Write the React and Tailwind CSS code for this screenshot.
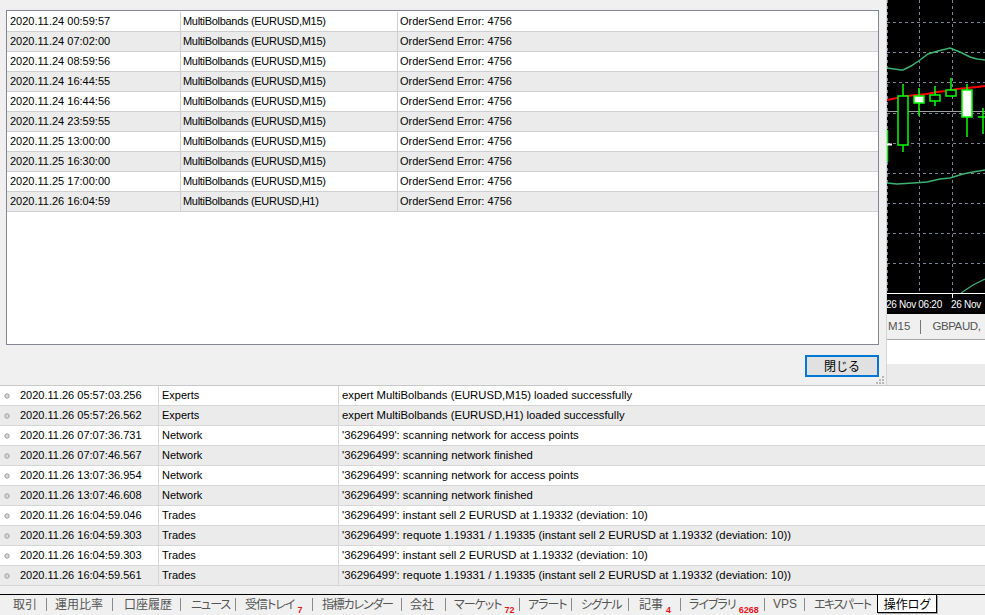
import React from "react";

const topRows = [
  ["2020.11.24 00:59:57", "MultiBolbands (EURUSD,M15)"],
  ["2020.11.24 07:02:00", "MultiBolbands (EURUSD,M15)"],
  ["2020.11.24 08:59:56", "MultiBolbands (EURUSD,M15)"],
  ["2020.11.24 16:44:55", "MultiBolbands (EURUSD,M15)"],
  ["2020.11.24 16:44:56", "MultiBolbands (EURUSD,M15)"],
  ["2020.11.24 23:59:55", "MultiBolbands (EURUSD,M15)"],
  ["2020.11.25 13:00:00", "MultiBolbands (EURUSD,M15)"],
  ["2020.11.25 16:30:00", "MultiBolbands (EURUSD,M15)"],
  ["2020.11.25 17:00:00", "MultiBolbands (EURUSD,M15)"],
  ["2020.11.26 16:04:59", "MultiBolbands (EURUSD,H1)"],
];

const logRows = [
  ["2020.11.26 05:57:03.256", "Experts", "expert MultiBolbands (EURUSD,M15) loaded successfully"],
  ["2020.11.26 05:57:26.562", "Experts", "expert MultiBolbands (EURUSD,H1) loaded successfully"],
  ["2020.11.26 07:07:36.731", "Network", "'36296499': scanning network for access points"],
  ["2020.11.26 07:07:46.567", "Network", "'36296499': scanning network finished"],
  ["2020.11.26 13:07:36.954", "Network", "'36296499': scanning network for access points"],
  ["2020.11.26 13:07:46.608", "Network", "'36296499': scanning network finished"],
  ["2020.11.26 16:04:59.046", "Trades", "'36296499': instant sell 2 EURUSD at 1.19332 (deviation: 10)"],
  ["2020.11.26 16:04:59.303", "Trades", "'36296499': requote 1.19331 / 1.19335 (instant sell 2 EURUSD at 1.19332 (deviation: 10))"],
  ["2020.11.26 16:04:59.303", "Trades", "'36296499': instant sell 2 EURUSD at 1.19332 (deviation: 10)"],
  ["2020.11.26 16:04:59.561", "Trades", "'36296499': requote 1.19331 / 1.19335 (instant sell 2 EURUSD at 1.19332 (deviation: 10))"],
];

function Chart() {
  const hs = [22, 52, 82, 113, 143, 173, 203, 233, 263];
  const vs = [0.5, 32.5, 65.5];
  const candles = [
    { x: 11, top: 96, bot: 145, wt: 84, wb: 152, fill: "#000" },
    { x: 27, top: 96, bot: 103, wt: 88, wb: 116, fill: "#fff" },
    { x: 43, top: 95, bot: 101, wt: 86, wb: 106, fill: "#000" },
    { x: 59, top: 90, bot: 96, wt: 78, wb: 96, fill: "#000" },
    { x: 75, top: 90, bot: 117, wt: 84, wb: 137, fill: "#fff" },
  ];
  return (
    <svg width="98" height="314" className="block">
      <rect x="0" y="0" width="98" height="314" fill="#000" />
      {hs.map((y) => (
        <line key={"h" + y} x1="0" x2="98" y1={y + 0.5} y2={y + 0.5} stroke="#7a8698" strokeDasharray="3 3" />
      ))}
      {vs.map((x) => (
        <line key={"v" + x} x1={x} x2={x} y1="0" y2="293" stroke="#7a8698" strokeDasharray="3 3" />
      ))}
      <line x1="0" x2="98" y1="111.5" y2="111.5" stroke="#a0a0a0" />
      <polyline
        points="0,68 14,70 16,70 24,66 33,60 41,54 51,51 63,48 68,50 73,52 83,57 90,59 98,60"
        fill="none"
        stroke="#3cb371"
        strokeWidth="1.5"
      />
      <polyline
        points="0,100 10,98 20,96 30,95 40,94 50,92 60,91 70,89 80,88 90,87 98,86"
        fill="none"
        stroke="#ff0000"
        strokeWidth="2"
      />
      <polyline
        points="0,183 10,184 26,183 40,182 53,179 63,178 76,174 86,172 98,170"
        fill="none"
        stroke="#3cb371"
        strokeWidth="1.5"
      />
      <polyline points="74,293 80,289 86,285 92,282 98,279" fill="none" stroke="#3cb371" strokeWidth="1.2" />
      <line x1="0.5" x2="0.5" y1="130" y2="162" stroke="#00ff00" strokeWidth="1.5" />
      <line x1="0" x2="5" y1="144.5" y2="144.5" stroke="#ffffff" strokeWidth="2" />
      {candles.map((c, i) => (
        <g key={i}>
          <line x1={c.x + 5} x2={c.x + 5} y1={c.wt} y2={c.wb} stroke="#00ff00" strokeWidth="1.5" />
          <rect x={c.x} y={c.top} width="10" height={c.bot - c.top} fill={c.fill} stroke="#00ff00" strokeWidth="1.5" />
        </g>
      ))}
      <line x1="96" x2="96" y1="108" y2="134" stroke="#00ff00" strokeWidth="1.5" />
      <line x1="91" x2="98" y1="117" y2="117" stroke="#00ff00" strokeWidth="1.5" />
      <rect x="0" y="293" width="98" height="21" fill="#000" />
      <line x1="0" x2="98" y1="293.5" y2="293.5" stroke="#ffffff" />
      <line x1="65.5" x2="65.5" y1="293" y2="298" stroke="#ffffff" />
      <text x="-1" y="308" fill="#ffffff" fontSize="10" letterSpacing="-0.3" fontFamily="Liberation Sans, sans-serif">
        26 Nov 06:20
      </text>
      <text x="64" y="308" fill="#ffffff" fontSize="10" letterSpacing="-0.3" fontFamily="Liberation Sans, sans-serif">
        26 Nov
      </text>
    </svg>
  );
}

function Grip() {
  return (
    <svg width="8" height="8" className="block">
      <rect x="6" y="0" width="2" height="2" fill="#b8b8b8" />
      <rect x="3" y="3" width="2" height="2" fill="#b8b8b8" />
      <rect x="6" y="3" width="2" height="2" fill="#b8b8b8" />
      <rect x="0" y="6" width="2" height="2" fill="#b8b8b8" />
      <rect x="3" y="6" width="2" height="2" fill="#b8b8b8" />
      <rect x="6" y="6" width="2" height="2" fill="#b8b8b8" />
    </svg>
  );
}

function Sep() {
  return <div className="w-px h-[13px] bg-[#8a8a8a] shrink-0" />;
}

function Num({ children }) {
  return (
    <span className="text-[9px] font-bold tracking-normal text-[#e8141a] ml-[3px] relative top-[4px] font-['Liberation_Sans',sans-serif]">
      {children}
    </span>
  );
}

export default function App() {
  return (
    <div className="w-[985px] h-[615px] overflow-hidden bg-[#f0f0f0] flex flex-col text-black font-['Liberation_Sans',sans-serif] text-[11px]">
      {/* top section */}
      <div className="h-[385px] flex shrink-0">
        {/* dialog */}
        <div className="w-[887px] h-full border-r border-[#d4d4d4] flex flex-col relative">
          <div className="ml-[6px] mt-[10px] w-[873px] h-[335px] border border-[#828790] bg-white pt-px overflow-hidden">
            {topRows.map((r, i) => (
              <div
                key={i}
                className={`flex h-[20px] border-b border-[#d0d0d0] whitespace-nowrap ${i % 2 === 1 ? "bg-[#ebebeb]" : "bg-white"}`}
              >
                <div className="w-[174px] border-r border-[#d0d0d0] flex items-center pl-[3px]">{r[0]}</div>
                <div className="w-[217px] border-r border-[#d0d0d0] flex items-center pl-[2px] tracking-[-0.3px]">{r[1]}</div>
                <div className="flex-1 flex items-center pl-[2px]">OrderSend Error: 4756</div>
              </div>
            ))}
          </div>
          <div className="ml-[6px] w-[873px] mt-[10px] flex justify-end">
            <button className="w-[74px] h-[22px] border-2 border-[#0078d7] bg-[#e1e1e1] flex items-center justify-center text-[12px] font-['Noto_Sans_CJK_JP',sans-serif] leading-none">
              閉じる
            </button>
          </div>
          <div className="absolute right-[2px] bottom-[1px]">
            <Grip />
          </div>
        </div>
        {/* chart column */}
        <div className="w-[98px] h-full flex flex-col">
          <Chart />
          <div className="h-[26px] bg-[#f0f0f0] border-b border-[#a8a8a8] flex items-center text-[11.5px] text-[#555] font-['Liberation_Sans',sans-serif] whitespace-nowrap overflow-hidden">
            <span className="ml-[1px]">M15</span>
            <span className="w-px h-[14px] bg-[#777] ml-[10px] mr-[11px] shrink-0" />
            <span className="tracking-[-0.4px]">GBPAUD,</span>
          </div>
          <div className="h-[24px] bg-white" />
          <div className="flex-1 bg-[#ebebeb]" />
        </div>
      </div>

      {/* log */}
      <div className="border-t border-[#c8c8c8] shrink-0">
        {logRows.map((r, i) => (
          <div
            key={i}
            className={`flex h-[20px] border-b border-[#d6d6d6] whitespace-nowrap ${i % 2 === 1 ? "bg-[#ebebeb]" : "bg-white"}`}
          >
            <div className="w-[159px] border-r border-[#d6d6d6] flex items-center pl-[4px]">
              <svg width="6" height="6" className="block shrink-0">
                <circle cx="3" cy="3" r="2.2" fill="#dcdcdc" stroke="#9a9a9a" strokeWidth="1" />
              </svg>
              <span className="ml-[10px]">{r[0]}</span>
            </div>
            <div className="w-[180px] border-r border-[#d6d6d6] flex items-center pl-[3px]">{r[1]}</div>
            <div className="flex-1 flex items-center pl-[3px] text-[11.3px]">{r[2]}</div>
          </div>
        ))}
      </div>

      <div className="flex-1" />

      {/* bottom tabs */}
      <div className="h-[21px] border-t border-black flex items-start shrink-0 text-[12px] text-[#555] font-['Noto_Sans_CJK_JP',sans-serif] [font-feature-settings:'palt'] whitespace-nowrap leading-none">
        <div className="flex items-center h-[18px] pl-[13px]">
          <span className="w-[33px] shrink-0">取引</span>
          <Sep />
          <span className="ml-[8px] w-[57px] shrink-0">運用比率</span>
          <Sep />
          <span className="ml-[11px] w-[56px] shrink-0">口座履歴</span>
          <Sep />
          <span className="ml-[10px] w-[44px] shrink-0 tracking-[-1px]">ニュース</span>
          <Sep />
          <span className="ml-[9px] w-[67px] shrink-0 tracking-[-1px]">
            受信トレイ<Num>7</Num>
          </span>
          <Sep />
          <span className="ml-[9px] w-[79px] shrink-0 tracking-[-1.2px]">指標カレンダー</span>
          <Sep />
          <span className="ml-[8px] w-[35px] shrink-0">会社</span>
          <Sep />
          <span className="ml-[8px] w-[65px] shrink-0 tracking-[-1px]">
            マーケット<Num>72</Num>
          </span>
          <Sep />
          <span className="ml-[8px] w-[43px] shrink-0 tracking-[-1px]">アラート</span>
          <Sep />
          <span className="ml-[9px] w-[47px] shrink-0 tracking-[-1px]">シグナル</span>
          <Sep />
          <span className="ml-[10px] w-[41px] shrink-0">
            記事<Num>4</Num>
          </span>
          <Sep />
          <span className="ml-[8px] w-[75px] shrink-0 tracking-[-1px]">
            ライブラリ<Num>6268</Num>
          </span>
          <Sep />
          <span className="ml-[8px] w-[31px] shrink-0 font-['Liberation_Sans',sans-serif]">VPS</span>
          <Sep />
          <span className="ml-[9px] w-[63px] shrink-0 tracking-[-1.5px]">エキスパート</span>
        </div>
        <div className="w-[60px] h-[18px] bg-white border-x border-b border-black flex items-center justify-center text-black shadow-[1px_1px_0_#a0a0a0]">
          操作ログ
        </div>
      </div>
    </div>
  );
}
